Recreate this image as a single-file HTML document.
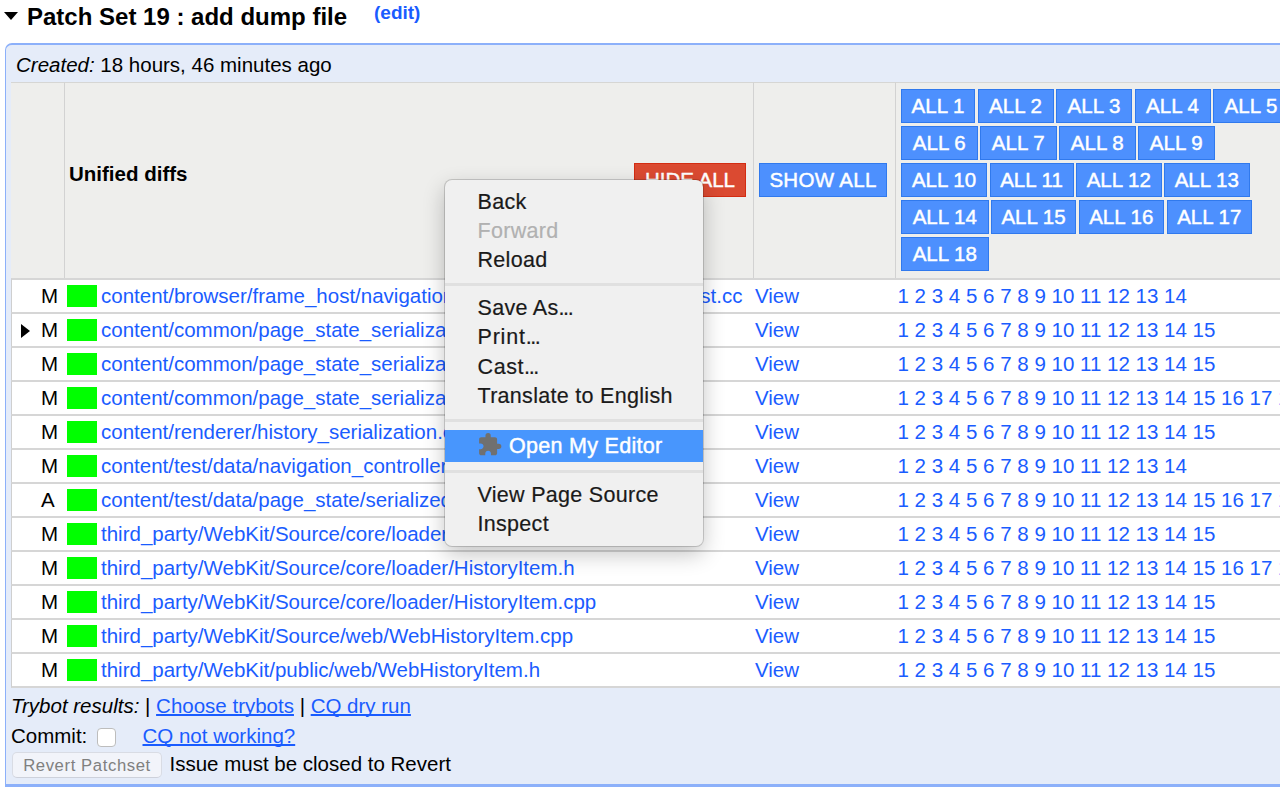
<!DOCTYPE html>
<html lang="en">
<head>
<meta charset="utf-8">
<title>Patch Set 19</title>
<style>
html,body{margin:0;padding:0;background:#fff;}
body{width:1280px;height:800px;overflow:hidden;position:relative;font-family:"Liberation Sans",Arial,sans-serif;font-size:20.5px;color:#000;}
a{color:#1a5cff;text-decoration:none;}
a.u{text-decoration:underline;text-decoration-skip-ink:none;text-decoration-thickness:2px;text-underline-offset:1px;}
.title{position:absolute;left:27px;top:3px;font-size:24px;font-weight:bold;line-height:28px;white-space:nowrap;}
.tri{position:absolute;left:4px;top:12px;width:0;height:0;border-left:7px solid transparent;border-right:7px solid transparent;border-top:8px solid #000;}
.edit{position:absolute;left:374px;top:1px;font-size:19px;font-weight:bold;line-height:24px;}
.panel{position:absolute;left:5px;top:43px;width:1400px;height:744px;box-sizing:border-box;border:solid #8cb0fa;border-width:2px 1px 3px 1px;border-radius:7px 7px 0 0;background:#e5ecf9;}
.created{position:absolute;left:10px;top:8px;line-height:24px;white-space:nowrap;}
table.files{position:absolute;left:5px;top:37px;border-collapse:separate;border-spacing:0;table-layout:fixed;width:1390px;}
table.files td{padding:0;vertical-align:middle;white-space:nowrap;box-sizing:border-box;}
tr.head td{background:#eeeeec;height:196px;border-right:1px solid #d2d2d2;border-top:1px solid #d6d6d4;}
tr.head td:last-child{border-right:none;}
tr.row td{background:#fff;height:34px;border-top:2px solid #d6d6d6;line-height:24px;}
tr.row:last-child td{height:36px;border-bottom:2px solid #d6d6d6;}
tr.row td:first-child{border-left:1px solid #cfcfcf;}
tr.row td.st{text-align:left;padding-left:29px;position:relative;}
.cur{position:absolute;left:9px;top:10px;width:0;height:0;border-top:7px solid transparent;border-bottom:7px solid transparent;border-left:9px solid #000;}
.box{display:inline-block;width:30px;height:22px;background:#00ff00;vertical-align:-4px;margin:0 4px 0 2px;}
.btn{display:inline-block;box-sizing:border-box;height:34px;line-height:32px;border:1px solid #3079ed;background:#4d90fe;color:#fff;font-size:20.5px;text-align:center;letter-spacing:.3px;-webkit-text-stroke:.45px #fff;}
.btn.red{background:#db4a31;border-color:#d32c12;letter-spacing:0;}
.allrow{height:37px;white-space:nowrap;font-size:0;}
.allrow .btn{margin-right:2.5px;vertical-align:top;letter-spacing:0;}
td.nums{padding-left:1.5px !important;}
td .vw{margin-left:1px;}
.foot{position:absolute;left:5px;white-space:nowrap;line-height:24px;}
.cb{position:absolute;left:91px;top:683px;width:19px;height:19px;box-sizing:border-box;border:1px solid #bdbdbd;border-radius:4px;background:#fff;}
.rbtn{position:absolute;left:6px;top:707px;width:150px;height:26px;box-sizing:border-box;border:1px solid #d9dce4;border-bottom-color:#cdd1db;border-radius:5px;background:#f2f4fa;color:#808080;font-size:16.7px;line-height:26px;text-align:center;letter-spacing:.6px;}
.menu{position:absolute;left:445px;top:180px;width:258px;color:#1a1a1a;height:366px;box-sizing:border-box;background:#f0f0f0;border-radius:7px;box-shadow:0 0 0 1px rgba(0,0,0,.16),0 8px 22px rgba(0,0,0,.24);font-size:21.5px;letter-spacing:.3px;-webkit-text-stroke:.2px;}
.menu .it{position:absolute;left:0;width:100%;height:29px;line-height:29px;padding-left:32.5px;box-sizing:border-box;white-space:nowrap;}
.dots{letter-spacing:-1.4px;}
.menu .dis{color:#b1b1b1;}
.menu .sep{position:absolute;left:0;width:100%;height:3px;background:#e0e0e0;}
.menu .hl{background:#4896fd;color:#fff;-webkit-text-stroke:.45px #fff;height:32px;line-height:32px;padding-left:64px;}
</style>
</head>
<body>
<div class="tri"></div>
<div class="title">Patch Set 19 : add dump file</div>
<a class="edit">(edit)</a>

<div class="panel">
  <div class="created"><i>Created:</i> 18 hours, 46 minutes ago</div>
  <table class="files">
    <colgroup><col style="width:54px"><col style="width:689px"><col style="width:142px"><col></colgroup>
    <tr class="head">
      <td></td>
      <td style="position:relative"><b style="position:absolute;left:4px;top:79px;font-size:20.5px;line-height:24px">Unified diffs</b><span class="btn red" style="position:absolute;left:569px;top:80px;width:112px">HIDE ALL</span></td>
      <td style="position:relative"><span class="btn" style="position:absolute;left:5px;top:80px;width:128px">SHOW ALL</span></td>
      <td style="vertical-align:top;padding:6px 0 0 5px">
        <div class="allrow"><span class="btn" style="width:74px">ALL 1</span><span class="btn" style="width:76px">ALL 2</span><span class="btn" style="width:76px">ALL 3</span><span class="btn" style="width:76px">ALL 4</span><span class="btn" style="width:76px">ALL 5</span></div>
        <div class="allrow"><span class="btn" style="width:76.5px">ALL 6</span><span class="btn" style="width:76.5px">ALL 7</span><span class="btn" style="width:76.5px">ALL 8</span><span class="btn" style="width:76.5px">ALL 9</span></div>
        <div class="allrow"><span class="btn" style="width:86px">ALL 10</span><span class="btn" style="width:84px">ALL 11</span><span class="btn" style="width:85.5px">ALL 12</span><span class="btn" style="width:85.5px">ALL 13</span></div>
        <div class="allrow"><span class="btn" style="width:87.5px">ALL 14</span><span class="btn" style="width:85px">ALL 15</span><span class="btn" style="width:85.5px">ALL 16</span><span class="btn" style="width:85.5px">ALL 17</span></div>
        <div class="allrow"><span class="btn" style="width:87.5px">ALL 18</span></div>
      </td>
    </tr>
    <tr class="row"><td class="st">M</td><td><span class="box"></span><a>content/browser/frame_host/navigation_controller_impl_browsertest.cc</a></td><td><a class="vw">View</a></td><td class="nums"><a>1</a> <a>2</a> <a>3</a> <a>4</a> <a>5</a> <a>6</a> <a>7</a> <a>8</a> <a>9</a> <a>10</a> <a>11</a> <a>12</a> <a>13</a> <a>14</a></td></tr>
    <tr class="row"><td class="st"><span class="cur"></span>M</td><td><span class="box"></span><a>content/common/page_state_serialization.h</a></td><td><a class="vw">View</a></td><td class="nums"><a>1</a> <a>2</a> <a>3</a> <a>4</a> <a>5</a> <a>6</a> <a>7</a> <a>8</a> <a>9</a> <a>10</a> <a>11</a> <a>12</a> <a>13</a> <a>14</a> <a>15</a></td></tr>
    <tr class="row"><td class="st">M</td><td><span class="box"></span><a>content/common/page_state_serialization.cc</a></td><td><a class="vw">View</a></td><td class="nums"><a>1</a> <a>2</a> <a>3</a> <a>4</a> <a>5</a> <a>6</a> <a>7</a> <a>8</a> <a>9</a> <a>10</a> <a>11</a> <a>12</a> <a>13</a> <a>14</a> <a>15</a></td></tr>
    <tr class="row"><td class="st">M</td><td><span class="box"></span><a>content/common/page_state_serialization_unittest.cc</a></td><td><a class="vw">View</a></td><td class="nums"><a>1</a> <a>2</a> <a>3</a> <a>4</a> <a>5</a> <a>6</a> <a>7</a> <a>8</a> <a>9</a> <a>10</a> <a>11</a> <a>12</a> <a>13</a> <a>14</a> <a>15</a> <a>16</a> <a>17</a> <a>18</a></td></tr>
    <tr class="row"><td class="st">M</td><td><span class="box"></span><a>content/renderer/history_serialization.cc</a></td><td><a class="vw">View</a></td><td class="nums"><a>1</a> <a>2</a> <a>3</a> <a>4</a> <a>5</a> <a>6</a> <a>7</a> <a>8</a> <a>9</a> <a>10</a> <a>11</a> <a>12</a> <a>13</a> <a>14</a> <a>15</a></td></tr>
    <tr class="row"><td class="st">M</td><td><span class="box"></span><a>content/test/data/navigation_controller/form.html</a></td><td><a class="vw">View</a></td><td class="nums"><a>1</a> <a>2</a> <a>3</a> <a>4</a> <a>5</a> <a>6</a> <a>7</a> <a>8</a> <a>9</a> <a>10</a> <a>11</a> <a>12</a> <a>13</a> <a>14</a></td></tr>
    <tr class="row"><td class="st">A</td><td><span class="box"></span><a>content/test/data/page_state/serialized_v23.dat</a></td><td><a class="vw">View</a></td><td class="nums"><a>1</a> <a>2</a> <a>3</a> <a>4</a> <a>5</a> <a>6</a> <a>7</a> <a>8</a> <a>9</a> <a>10</a> <a>11</a> <a>12</a> <a>13</a> <a>14</a> <a>15</a> <a>16</a> <a>17</a> <a>18</a></td></tr>
    <tr class="row"><td class="st">M</td><td><span class="box"></span><a>third_party/WebKit/Source/core/loader/FrameLoader.cpp</a></td><td><a class="vw">View</a></td><td class="nums"><a>1</a> <a>2</a> <a>3</a> <a>4</a> <a>5</a> <a>6</a> <a>7</a> <a>8</a> <a>9</a> <a>10</a> <a>11</a> <a>12</a> <a>13</a> <a>14</a> <a>15</a></td></tr>
    <tr class="row"><td class="st">M</td><td><span class="box"></span><a>third_party/WebKit/Source/core/loader/HistoryItem.h</a></td><td><a class="vw">View</a></td><td class="nums"><a>1</a> <a>2</a> <a>3</a> <a>4</a> <a>5</a> <a>6</a> <a>7</a> <a>8</a> <a>9</a> <a>10</a> <a>11</a> <a>12</a> <a>13</a> <a>14</a> <a>15</a> <a>16</a> <a>17</a> <a>18</a></td></tr>
    <tr class="row"><td class="st">M</td><td><span class="box"></span><a>third_party/WebKit/Source/core/loader/HistoryItem.cpp</a></td><td><a class="vw">View</a></td><td class="nums"><a>1</a> <a>2</a> <a>3</a> <a>4</a> <a>5</a> <a>6</a> <a>7</a> <a>8</a> <a>9</a> <a>10</a> <a>11</a> <a>12</a> <a>13</a> <a>14</a> <a>15</a></td></tr>
    <tr class="row"><td class="st">M</td><td><span class="box"></span><a>third_party/WebKit/Source/web/WebHistoryItem.cpp</a></td><td><a class="vw">View</a></td><td class="nums"><a>1</a> <a>2</a> <a>3</a> <a>4</a> <a>5</a> <a>6</a> <a>7</a> <a>8</a> <a>9</a> <a>10</a> <a>11</a> <a>12</a> <a>13</a> <a>14</a> <a>15</a></td></tr>
    <tr class="row"><td class="st">M</td><td><span class="box"></span><a>third_party/WebKit/public/web/WebHistoryItem.h</a></td><td><a class="vw">View</a></td><td class="nums"><a>1</a> <a>2</a> <a>3</a> <a>4</a> <a>5</a> <a>6</a> <a>7</a> <a>8</a> <a>9</a> <a>10</a> <a>11</a> <a>12</a> <a>13</a> <a>14</a> <a>15</a></td></tr>
  </table>
  <div class="foot" style="top:649px"><i>Trybot results:</i> | <a class="u">Choose trybots</a> | <a class="u">CQ dry run</a></div>
  <div class="foot" style="top:679px">Commit:</div>
  <span class="cb"></span>
  <a class="u foot" style="left:136.5px;top:679px">CQ not working?</a>
  <span class="rbtn">Revert Patchset</span>
  <div class="foot" style="left:163.5px;top:707px">Issue must be closed to Revert</div>
</div>

<div class="menu">
  <div class="it" style="top:7.5px">Back</div>
  <div class="it dis" style="top:36.75px">Forward</div>
  <div class="it" style="top:66px">Reload</div>
  <div class="sep" style="top:103px"></div>
  <div class="it" style="top:114.2px">Save As<span class="dots">...</span></div>
  <div class="it" style="top:143.45px;letter-spacing:.8px">Print<span class="dots">...</span></div>
  <div class="it" style="top:172.7px;letter-spacing:.6px">Cast<span class="dots">...</span></div>
  <div class="it" style="top:202px">Translate to English</div>
  <div class="sep" style="top:239px"></div>
  <div class="it hl" style="top:250px"><svg style="position:absolute;left:31.6px;top:1.9px" width="25.4" height="25.4" viewBox="0 0 24 24"><path fill="#707070" d="M20.5 11H19V7c0-1.1-.9-2-2-2h-4V3.5a2.5 2.5 0 0 0-5 0V5H4c-1.1 0-2 .9-2 2v3.8h1.5c1.5 0 2.7 1.2 2.7 2.7S5 16.200 3.500 16.200H2V20c0 1.100.9 2 2 2h3.800v-1.500c0-1.500 1.200-2.700 2.700-2.700s2.700 1.200 2.700 2.700V22H17c1.100 0 2-.9 2-2v-4h1.500a2.500 2.500 0 0 0 0-5z"/></svg>Open My Editor</div>
  <div class="sep" style="top:290px"></div>
  <div class="it" style="top:301px">View Page Source</div>
  <div class="it" style="top:330px">Inspect</div>
</div>
</body>
</html>
